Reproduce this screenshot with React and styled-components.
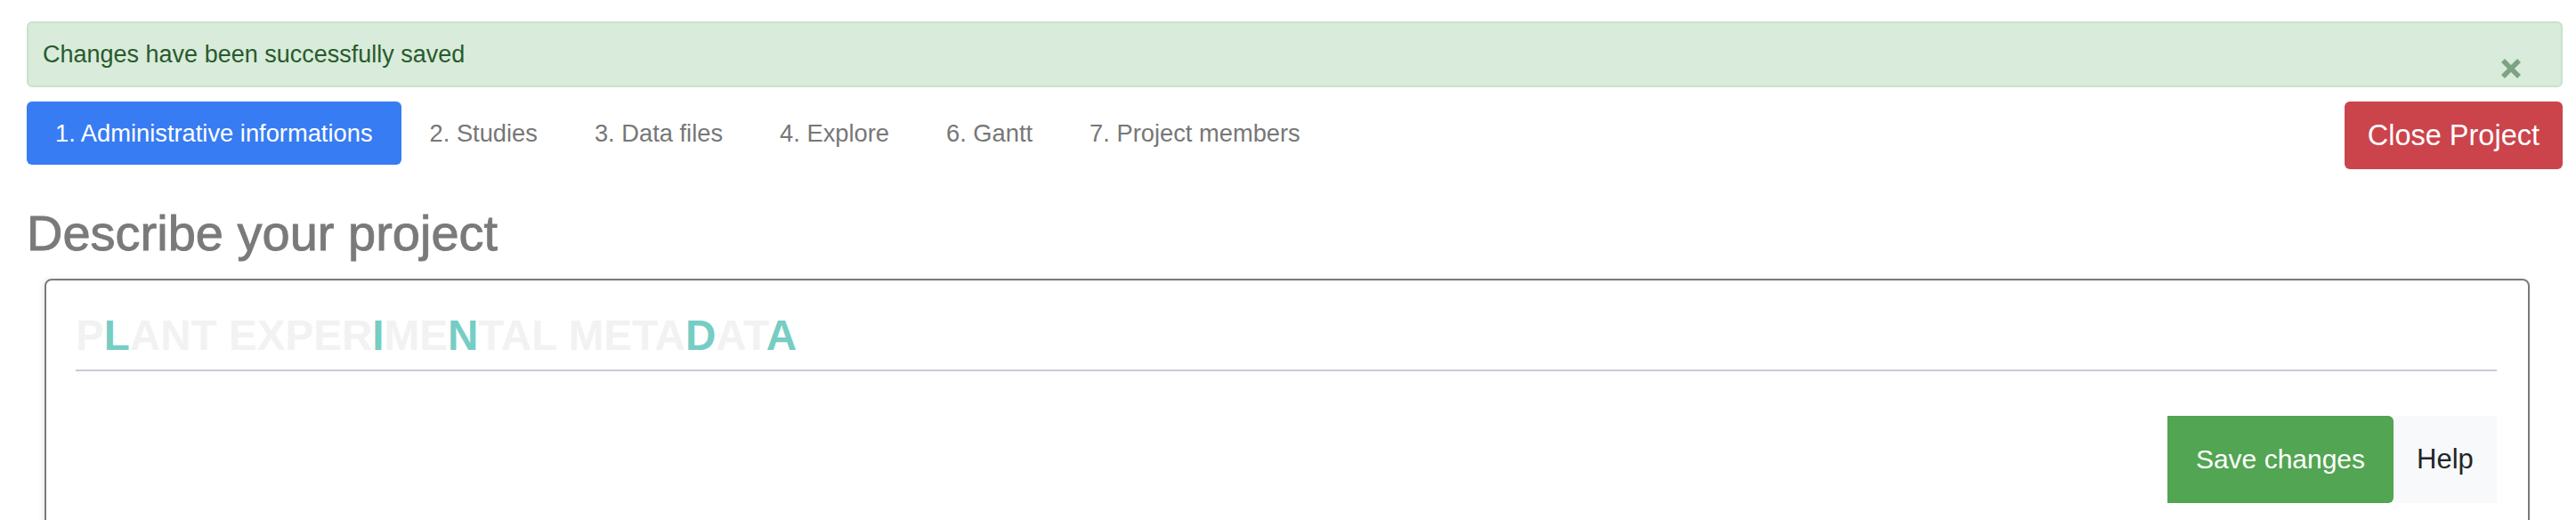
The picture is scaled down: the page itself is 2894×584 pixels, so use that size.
import React from "react";
import styled, { createGlobalStyle } from "styled-components";

const GlobalStyle = createGlobalStyle`
  body {
    margin: 0;
    background: #fff;
    font-family: "Liberation Sans", Arial, sans-serif;
  }
`;

const tabs = [
  "1. Administrative informations",
  "2. Studies",
  "3. Data files",
  "4. Explore",
  "6. Gantt",
  "7. Project members",
];

// which letters of the logo get the teal accent
const logoText = "PLANT EXPERIMENTAL METADATA";
const accented = [1, 11, 14, 23, 26];

const App = () => {
  return (
    <>
      <GlobalStyle />
      <Page>
        <Alert>
          <AlertText>Changes have been successfully saved</AlertText>
          <CloseAlert aria-label="close">
            <svg width="24" height="24" viewBox="0 0 24 24">
              <path d="M3 3 L21 21 M21 3 L3 21" stroke="#7da383" strokeWidth="5.5" />
            </svg>
          </CloseAlert>
        </Alert>

        <NavRow>
          <Tabs>
            {tabs.map((t, i) => (
              <Tab key={t} $active={i === 0}>
                {t}
              </Tab>
            ))}
          </Tabs>
          <DangerButton>Close Project</DangerButton>
        </NavRow>

        <Heading>Describe your project</Heading>

        <Card>
          <Logo>
            {logoText.split("").map((c, i) => (
              <LogoLetter key={i} $accent={accented.includes(i)}>
                {c}
              </LogoLetter>
            ))}
          </Logo>
          <Actions>
            <SaveButton>Save changes</SaveButton>
            <HelpButton>Help</HelpButton>
          </Actions>
        </Card>
      </Page>
    </>
  );
};

export default App;

const Page = styled.div`
  padding: 24px 15px 0 30px;
  height: 584px;
  box-sizing: border-box;
  overflow: hidden;
`;

const Alert = styled.div`
  display: flex;
  align-items: center;
  justify-content: space-between;
  height: 74px;
  box-sizing: border-box;
  padding: 0 44px 0 16px;
  background: #d9ebdb;
  border: 2px solid #c6e3cb;
  border-radius: 6px;
  margin-bottom: 16px;
`;

const AlertText = styled.span`
  font-size: 27px;
  color: #285b2c;
`;

const CloseAlert = styled.button`
  align-self: flex-end;
  margin-bottom: 7px;
  padding: 0;
  border: none;
  background: none;
  display: flex;
`;

const NavRow = styled.div`
  display: flex;
  justify-content: space-between;
  align-items: flex-start;
`;

const Tabs = styled.div`
  display: flex;
`;

const Tab = styled.div`
  height: 71px;
  display: flex;
  align-items: center;
  padding: 0 32px;
  font-size: 27.3px;
  border-radius: 6px;
  color: ${(p) => (p.$active ? "#fff" : "#777")};
  background: ${(p) => (p.$active ? "#377cf3" : "transparent")};
`;

const DangerButton = styled.button`
  height: 76px;
  padding: 0 26px;
  border: none;
  border-radius: 6px;
  background: #cb444b;
  color: #fff;
  font-family: "Liberation Sans", Arial, sans-serif;
  font-size: 32.5px;
`;

const Heading = styled.h3`
  margin: 38px 0 18px 0;
  font-size: 56px;
  line-height: 1.2;
  font-weight: 500;
  color: #7a7a7a;
  -webkit-text-stroke: 0.9px #7a7a7a;
`;

const Card = styled.div`
  margin: 0 37px 0 20px;
  border: 2px solid #7b7b7b;
  border-radius: 8px;
  box-shadow: -2px 0 6px rgba(0, 0, 0, 0.08);
  padding: 33px 35px 60px 33px;
`;

const Logo = styled.div`
  font-family: "Liberation Sans", Arial, sans-serif;
  font-weight: 700;
  font-size: 47.6px;
  line-height: 1.2;
  padding-bottom: 10px;
  border-bottom: 2px solid #c8cbd6;
  white-space: pre;
`;

const LogoLetter = styled.span`
  color: ${(p) => (p.$accent ? "#76cdc4" : "#f2f2f2")};
`;

const Actions = styled.div`
  display: flex;
  justify-content: flex-end;
  margin-top: 50px;
`;

const SaveButton = styled.button`
  height: 98px;
  width: 254px;
  border: none;
  border-radius: 0 6px 6px 0;
  background: #52a552;
  color: #fff;
  font-family: "Liberation Sans", Arial, sans-serif;
  font-size: 30px;
`;

const HelpButton = styled.button`
  height: 98px;
  width: 116px;
  border: none;
  background: #f8f9fa;
  color: #212529;
  font-family: "Liberation Sans", Arial, sans-serif;
  font-size: 31px;
`;
